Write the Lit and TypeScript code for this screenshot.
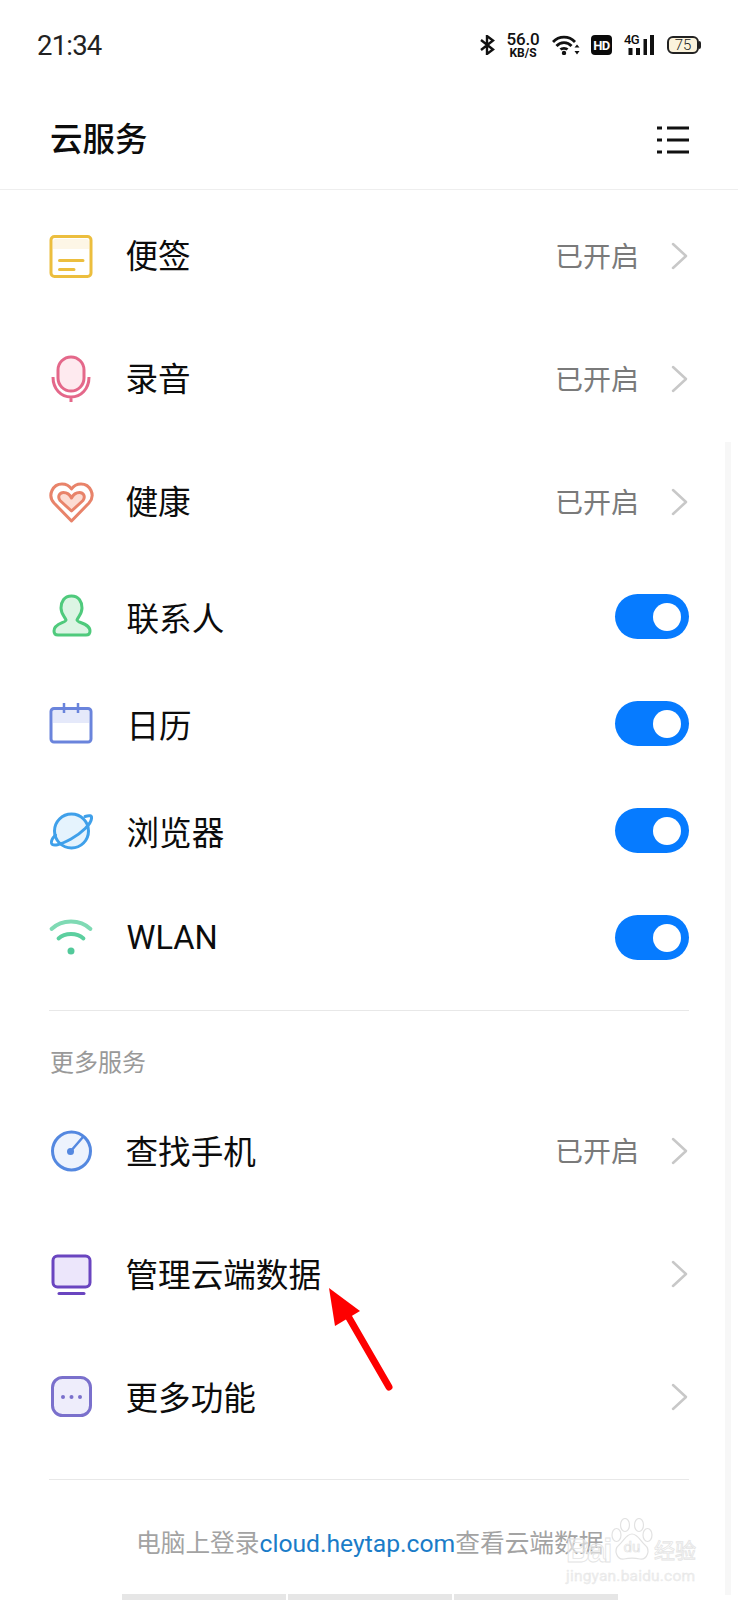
import { LitElement, css, html, svg } from "lit";
import { customElement } from "lit/decorators.js";

const icons = {
  note: svg`
    <path d="M6 17 V10 a3 3 0 0 1 3-3 h30 a3 3 0 0 1 3 3 v7z" fill="#fdf6e6"/>
    <rect x="4" y="4.500" width="40" height="40" rx="3.500" fill="none" stroke="#ecbe3e" stroke-width="3"/>
    <path d="M12.500 28.500 H36 M12.500 37.500 H27" stroke="#ecbe3e" stroke-width="3" stroke-linecap="round"/>`,
  mic: svg`
    <rect x="11" y="2" width="26" height="34" rx="13" fill="#feeaef" stroke="#e4688a" stroke-width="3"/>
    <path d="M6 22 C6 34 14 42 24 42 S42 34 42 22 M24 42 V47" fill="none" stroke="#e4688a" stroke-width="3"/>`,
  heart: svg`
    <path d="M24.500 43 L7 25 C0 17 6 6 15 6 C19 6 22.500 8 24.500 11 C26.500 8 30 6 34 6 C43 6 49 17 42 25 Z" fill="#fff" stroke="#e8836a" stroke-width="3" stroke-linejoin="round"/>
    <path d="M24.500 33 L13 22.500 C10 18 13 14.500 16.500 14.500 C20 14.500 23 17 24.500 20 C26 17 29 14.500 32.500 14.500 C36 14.500 39 18 36 22.500 Z" fill="#fcdcd3" stroke="#e8836a" stroke-width="3" stroke-linejoin="round"/>`,
  person: svg`
    <path d="M24.500 3 C17 3 14 9 14 15 C14 21 18 24 19 27 C19 30 7 30 7 38 C7 41 9 42 11 42 H39 C41 42 43 41 43 38 C43 30 30 30 30 27 C31 24 35 21 35 15 C35 9 32 3 24.500 3 Z" fill="#dcf5e4" stroke="#4fca7c" stroke-width="3" stroke-linejoin="round"/>`,
  calendar: svg`
    <path d="M6 10 H42 V23 H6Z" fill="#e5e9fa"/>
    <rect x="4" y="8.500" width="40" height="33.500" rx="3" fill="none" stroke="#6a84dc" stroke-width="3"/>
    <path d="M17 3 V13 M31 3 V13" stroke="#6a84dc" stroke-width="2.500"/>`,
  planet: svg`
    <circle cx="24.500" cy="24" r="17" fill="#e5f3fd" stroke="#3fa0ea" stroke-width="3"/>
    <path d="M38 9.500 C42.500 8 45 8.500 44.500 11.500 C44 17 35 26 24 32 C13 38 5.500 40 4.500 36 C4 33.500 5.500 31 8.500 28" fill="none" stroke="#3fa0ea" stroke-width="3" stroke-linecap="round"/>`,
  wifi: svg`
    <path d="M4.500 15 C15 5 33 5 43.500 15" fill="none" stroke="#7fdab4" stroke-width="3.800" stroke-linecap="round"/>
    <path d="M11.500 24.500 C18 18.500 30 18.500 36.500 24.500" fill="none" stroke="#5ccf9f" stroke-width="3.800" stroke-linecap="round"/>
    <circle cx="24" cy="37" r="3.500" fill="#52c99a"/>`,
  gauge: svg`
    <circle cx="24.500" cy="24" r="19" fill="#edf3fd" stroke="#5488e0" stroke-width="3"/>
    <path d="M23 25 L36 10" stroke="#5488e0" stroke-width="2.500" stroke-linecap="round"/>
    <circle cx="23.500" cy="24.500" r="3.500" fill="#5488e0"/>`,
  monitor: svg`
    <rect x="6" y="6" width="37" height="31" rx="4.500" fill="#ece6fb" stroke="#6a45c0" stroke-width="3"/>
    <path d="M12 43.500 H37" stroke="#6a45c0" stroke-width="3" stroke-linecap="round"/>`,
  more: svg`
    <rect x="5.500" y="4.500" width="38" height="38" rx="10" fill="#eeedfb" stroke="#7a70cc" stroke-width="3"/>
    <circle cx="16" cy="24" r="2" fill="#7a70cc"/>
    <circle cx="24.500" cy="24" r="2" fill="#7a70cc"/>
    <circle cx="33" cy="24" r="2" fill="#7a70cc"/>`
};

type IconName = keyof typeof icons;
type Row = { icon: IconName; label: string; kind: "on" | "arrow" | "toggle" };

const topRows: Row[] = [
  { icon: "note", label: "便签", kind: "on" },
  { icon: "mic", label: "录音", kind: "on" },
  { icon: "heart", label: "健康", kind: "on" },
  { icon: "person", label: "联系人", kind: "toggle" },
  { icon: "calendar", label: "日历", kind: "toggle" },
  { icon: "planet", label: "浏览器", kind: "toggle" },
  { icon: "wifi", label: "WLAN", kind: "toggle" }
];

const moreRows: Row[] = [
  { icon: "gauge", label: "查找手机", kind: "on" },
  { icon: "monitor", label: "管理云端数据", kind: "arrow" },
  { icon: "more", label: "更多功能", kind: "arrow" }
];

@customElement("app-root")
export class AppRoot extends LitElement {
  static styles = css`
    :host {
      display: block;
      position: relative;
      width: 738px;
      height: 1600px;
      overflow: hidden;
      background: #fff;
      color: #0c0c0c;
      font-family: Roboto, "Noto Sans CJK SC", sans-serif;
    }

    .status {
      display: flex;
      align-items: center;
      height: 90px;
      padding: 0 39px 0 37px;
      box-sizing: border-box;
    }

    .time {
      flex: 1;
      font-size: 27.500px;
      letter-spacing: -0.800px;
      color: #222;
    }

    .speed {
      display: flex;
      flex-direction: column;
      align-items: center;
      width: 32px;
      margin: 0 13px 0 12px;
      color: #111;
    }

    .speed b {
      font-size: 17px;
      font-weight: 500;
      line-height: 15px;
      letter-spacing: -0.200px;
    }

    .speed small {
      font-size: 12px;
      font-weight: 700;
      line-height: 12px;
    }

    .hd {
      display: flex;
      align-items: center;
      justify-content: center;
      width: 21px;
      height: 20px;
      margin: 0 12px 0 11px;
      border-radius: 4px;
      background: #0a0a0a;
      color: #fff;
      font-size: 13px;
      font-weight: 700;
      letter-spacing: -0.500px;
    }

    .signal {
      position: relative;
      width: 30px;
      height: 20px;
      margin-right: 13px;
    }

    .signal span {
      position: absolute;
      left: 0;
      top: -3px;
      font-size: 13px;
      font-weight: 500;
      letter-spacing: -0.600px;
    }

    .battery {
      position: relative;
      display: flex;
      align-items: center;
      justify-content: center;
      box-sizing: border-box;
      width: 32px;
      height: 18px;
      border: 2px solid #222;
      border-radius: 6px;
      background: #fbf3dc;
      font-size: 15px;
      font-weight: 300;
      color: #222;
    }

    .battery::after {
      content: "";
      position: absolute;
      right: -4px;
      top: 3px;
      width: 2px;
      height: 8px;
      border-radius: 0 2px 2px 0;
      background: #222;
    }

    .titlebar {
      display: flex;
      align-items: center;
      justify-content: space-between;
      height: 100px;
      padding: 0 49px 7px 50px;
      border-bottom: 1px solid #eeeeee;
      box-sizing: border-box;
      font-size: 32.500px;
      font-weight: 500;
    }

    .titlebar svg {
      margin-top: 7px;
    }

    .rows {
      padding-top: 4px;
    }

    .row {
      display: flex;
      align-items: center;
      height: 123px;
      padding: 0 49px 0 47px;
      font-size: 32.600px;
    }

    .row.toggle-row {
      height: 107px;
    }

    .row svg.icon {
      flex: none;
      width: 49px;
      height: 48px;
    }

    .label {
      flex: 1;
      margin-left: 29.500px;
      padding-bottom: 4px;
    }

    .toggle-row .label {
      margin-left: 30.500px;
      padding-bottom: 0;
    }

    .state {
      margin-right: 32px;
      padding-bottom: 2px;
      font-size: 28px;
      color: #7a7a7a;
    }

    .chevron {
      flex: none;
      margin-right: 1px;
    }

    .switch {
      display: flex;
      align-items: center;
      justify-content: flex-end;
      box-sizing: border-box;
      width: 74px;
      height: 45px;
      padding-right: 8px;
      border-radius: 23px;
      background: #067bff;
    }

    .switch i {
      width: 28px;
      height: 28px;
      border-radius: 50%;
      background: #fff;
    }

    .rule {
      height: 1px;
      margin: 0 49px;
      background: #e8e8e8;
    }

    .rule.first {
      margin-top: 19px;
    }

    .section {
      display: flex;
      align-items: center;
      height: 78.500px;
      padding: 20px 0 0 50px;
      box-sizing: border-box;
      font-size: 24px;
      color: #999;
    }

    .rule.last {
      margin-top: 20px;
    }

    .foot {
      margin-top: 49px;
      padding-left: 136px;
      font-size: 24.700px;
      line-height: 30px;
      color: #a3a3a3;
      white-space: nowrap;
    }

    .foot a {
      color: #1a7cc8;
      text-decoration: none;
    }

    .home {
      position: absolute;
      left: 122px;
      bottom: 0;
      display: flex;
      gap: 2px;
    }

    .home i {
      width: 164px;
      height: 6px;
      background: #e6e6e6;
    }

    .scroll {
      position: absolute;
      left: 725px;
      top: 442px;
      width: 6px;
      height: 1153px;
      background: #f7f7f7;
    }

    .arrow {
      position: absolute;
      left: 320px;
      top: 1280px;
    }

    .mark {
      position: absolute;
      left: 562px;
      top: 1518px;
      width: 142px;
      height: 70px;
      pointer-events: none;
    }

    .mark svg {
      position: absolute;
      left: 49px;
      top: 0;
    }

    .mark svg text {
      font: 400 15px Roboto, sans-serif;
      fill: #fff;
      stroke: #e2e2e2;
      stroke-width: 0.700;
    }

    .mark span {
      position: absolute;
      color: rgba(255, 255, 255, 0.500);
      -webkit-text-stroke: 0.800px #e4e4e4;
      white-space: nowrap;
    }

    .mark .bai {
      left: 4px;
      top: 14px;
      font: 700 33px "Liberation Sans", sans-serif;
      letter-spacing: -2.500px;
    }

    .mark .jing {
      left: 92px;
      top: 19px;
      font-size: 21px;
      line-height: 28px;
    }

    .mark .url {
      left: 4px;
      top: 49px;
      color: #efefef;
      font-size: 15.500px;
      line-height: 18px;
      letter-spacing: 0.200px;
      -webkit-text-stroke: 0.300px #e4e4e4;
    }
  `;

  private renderRow(row: Row) {
    return html`
      <div class="row ${row.kind === "toggle" ? "toggle-row" : ""}">
        <svg class="icon" viewBox="0 0 49 48">${icons[row.icon]}</svg>
        <span class="label">${row.label}</span>
        ${row.kind === "toggle"
          ? html`<span class="switch"><i></i></span>`
          : html`
              ${row.kind === "on" ? html`<span class="state">已开启</span>` : ""}
              <svg class="chevron" width="17" height="28" viewBox="0 0 17 28">
                <path d="M2 2 L15 14 L2 26" fill="none" stroke="#c8c8c8" stroke-width="2.500" stroke-linecap="round" stroke-linejoin="round"/>
              </svg>
            `}
      </div>
    `;
  }

  render() {
    return html`
      <div class="status">
        <span class="time">21:34</span>
        <svg width="15" height="20" viewBox="0 0 15 20">
          <path d="M1 5 L13 14.500 L7 19 V1 L13 5.500 L1 15" fill="none" stroke="#111" stroke-width="2.400"/>
        </svg>
        <span class="speed"><b>56.0</b><small>KB/S</small></span>
        <svg width="28" height="20" viewBox="0 0 28 20">
          <path d="M1 7 C7 0.500 17 0.500 23 7 M4.500 11 C8.500 6.500 15.500 6.500 19.500 11 M8.500 14.500 C10 13 14 13 15.500 14.500" fill="none" stroke="#111" stroke-width="2.800"/>
          <circle cx="12" cy="18" r="2.200" fill="#111"/>
          <path d="M25 9.500 L27.500 12.500 H22.500Z M25 19.500 L27.500 16 H22.500Z" fill="#111"/>
        </svg>
        <span class="hd">HD</span>
        <span class="signal">
          <span>4G</span>
          <svg width="30" height="20" viewBox="0 0 30 20">
            <path d="M4.500 13 h4 v7 h-4z M12 13 h4 v7 h-4z M19.500 4 h3.500 v16 h-3.500z M26 0 h4 v20 h-4z" fill="#111"/>
          </svg>
        </span>
        <span class="battery">75</span>
      </div>

      <div class="titlebar">
        <span>云服务</span>
        <svg width="32" height="28" viewBox="0 0 32 28">
          <path d="M0 2 H5 M0 14 H5 M0 26 H5 M10 2 H32 M10 14 H32 M10 26 H32" stroke="#111" stroke-width="3"/>
        </svg>
      </div>

      <div class="rows">${topRows.map((row) => this.renderRow(row))}</div>
      <div class="rule first"></div>
      <div class="section">更多服务</div>
      <div>${moreRows.map((row) => this.renderRow(row))}</div>
      <div class="rule last"></div>
      <div class="foot">电脑上登录<a>cloud.heytap.com</a>查看云端数据</div>

      <div class="scroll"></div>
      <div class="home"><i></i><i></i><i></i></div>

      <svg class="arrow" width="80" height="116" viewBox="0 0 80 116">
        <path d="M28 36 L69 107" stroke="#fe0000" stroke-width="7" stroke-linecap="round"/>
        <path d="M9 8 L40 31 L15 46Z" fill="#fe0000"/>
      </svg>

      <div class="mark">
        <svg width="42" height="46" viewBox="0 0 42 46" fill="none" stroke="#e2e2e2" stroke-width="1.200">
          <ellipse cx="5.500" cy="17" rx="4.500" ry="6.500"/>
          <ellipse cx="14" cy="7" rx="4.500" ry="6.500"/>
          <ellipse cx="28" cy="7" rx="4.500" ry="6.500"/>
          <ellipse cx="36.500" cy="17" rx="4.500" ry="6.500"/>
          <path d="M21 16 C15 16 13 23 8 27 C2 32 6 42 13 41 C18 40 24 40 29 41 C36 42 40 32 34 27 C29 23 27 16 21 16Z"/>
          <text x="12.500" y="34">du</text>
        </svg>
        <span class="bai">Bai</span>
        <span class="jing">经验</span>
        <span class="url">jingyan.baidu.com</span>
      </div>
    `;
  }
}
